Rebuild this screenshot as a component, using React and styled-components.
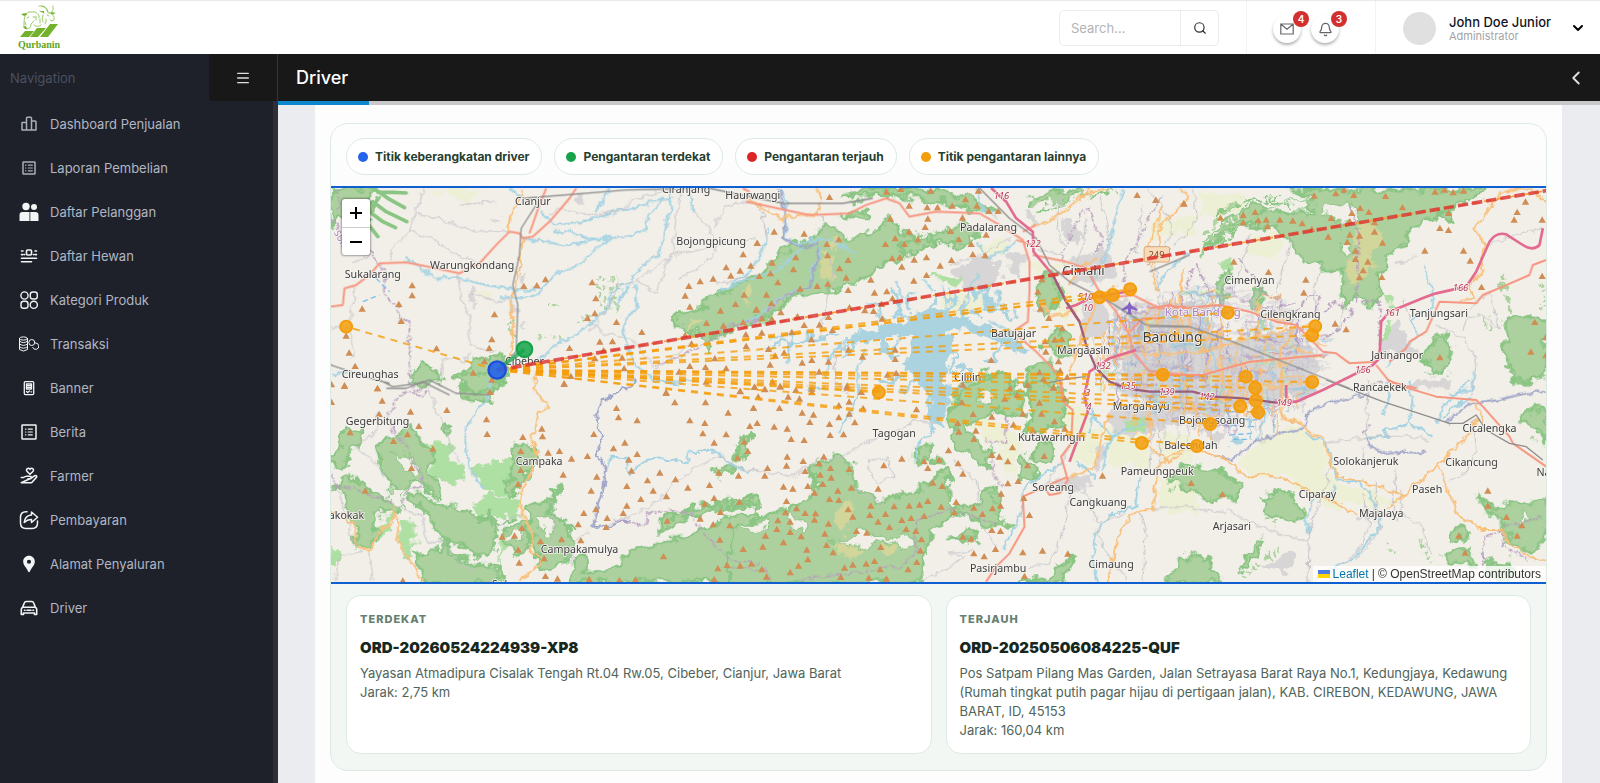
import React from 'react';
import styled, { createGlobalStyle } from 'styled-components';
import { Search, Bell, ChevronDown, ChevronLeft, Menu } from 'lucide-react';
import { MdLocationPin } from 'react-icons/md';

const GlobalStyle = createGlobalStyle`
	* {
		box-sizing: border-box;
	}
	body {
		margin: 0;
		font-family: Inter, 'Open Sans', sans-serif;
		font-size: 13px;
		background: #ebecf0;
	}
	h1, h2, p, ul {
		margin: 0;
		padding: 0;
	}
	button, input {
		font: inherit;
	}
	button {
		cursor: pointer;
		padding: 0;
		border: 0;
		background: none;
	}
`;

const Page = styled.div`
	min-height: 100vh;
	display: flex;
	flex-direction: column;
`;

const TopBar = styled.header`
	height: 54px;
	display: flex;
	align-items: stretch;
	background: #fff;
	border-top: 1px solid #e9e9eb;
`;

const LogoLink = styled.a`
	margin: 3px auto 0 16px;
	width: 46px;
	svg {
		display: block;
	}
`;

const SearchForm = styled.form`
	display: flex;
	align-self: center;
	width: 160px;
	height: 36px;
	margin-right: 27px;
	border: 1px solid #ececee;
	border-radius: 5px;

	input {
		flex: 1;
		min-width: 0;
		border: 0;
		outline: none;
		padding: 0 11px;
		background: transparent;
		color: #333;
		&::placeholder {
			color: #b3b3b5;
		}
	}
	button {
		width: 38px;
		display: flex;
		align-items: center;
		justify-content: center;
		border-left: 1px solid #ececee;
		color: #2c2c30;
	}
`;

const Notices = styled.div`
	display: flex;
	align-items: center;
	gap: 10px;
	width: 130px;
	padding: 3px 0 0 26px;
	border-left: 1px solid #f3f3f5;
	border-right: 1px solid #f3f3f5;
`;

const RoundButton = styled.button`
	position: relative;
	width: 28px;
	height: 28px;
	display: flex;
	align-items: center;
	justify-content: center;
	border-radius: 50%;
	background: #fff;
	color: #66666a;
	box-shadow: 0 2px 3px rgba(0, 0, 0, 0.3);
`;

const Badge = styled.span`
	position: absolute;
	top: -4px;
	right: -8px;
	width: 16px;
	height: 16px;
	border-radius: 50%;
	background: #d32f2f;
	color: #fff;
	font-size: 10px;
	font-weight: 600;
	line-height: 16px;
	text-align: center;
`;

const Profile = styled.button`
	width: 224px;
	display: flex;
	align-items: center;
	gap: 13px;
	padding: 1px 14px 0 27px;
	text-align: left;

	.avatar {
		width: 33px;
		height: 33px;
		border-radius: 50%;
		background: #e0e0e0;
	}
	.name {
		flex: 1;
		color: #14141f;
		font-weight: 500;
		line-height: 15px;
		white-space: nowrap;
	}
	.role {
		display: block;
		color: #a3a3a5;
		font-size: 11px;
		font-weight: 400;
		line-height: 12px;
	}
`;

const Body = styled.div`
	flex: 1;
	display: flex;
`;

const Sidebar = styled.nav`
	flex: 0 0 278px;
	background: #1e2129;
	border-right: 5px solid #302f38;

	ul {
		list-style: none;
		padding-top: 1px;
	}
`;

const SidebarHead = styled.div`
	display: flex;
	justify-content: space-between;
	align-items: center;
	height: 47px;
	padding-left: 10px;
	margin-right: -5px;
	color: #4a5060;

	button {
		width: 69px;
		height: 47px;
		display: flex;
		align-items: center;
		justify-content: center;
		background: #181818;
		color: #ddd;
		border-radius: 0 0 0 4px;
		border-right: 1px solid #34343a;
	}
`;

const NavLink = styled.a`
	height: 44px;
	display: flex;
	align-items: center;
	gap: 11px;
	padding-left: 19px;
	color: #b1b6c4;
	text-decoration: none;

	svg {
		width: 20px;
		height: 20px;
		color: ${(props) => (props.$muted ? '#a9aebb' : '#f3f4f6')};
	}
`;

const Main = styled.main`
	flex: 1;
	min-width: 0;
	display: flex;
	flex-direction: column;
`;

const TitleBar = styled.div`
	height: 47px;
	display: flex;
	align-items: center;
	justify-content: space-between;
	padding: 0 13px 0 18px;
	background: #181818;
	color: #fff;

	h1 {
		font-size: 18px;
		font-weight: 500;
	}
	button {
		display: flex;
		color: #e2e2e2;
	}
`;

const Progress = styled.div`
	height: 4px;
	background: #c8c8c8;
	&::before {
		content: '';
		display: block;
		width: 91px;
		height: 4px;
		background: #0b87d0;
	}
`;

const Content = styled.div`
	flex: 1;
	margin: 0 38px 0 37px;
	padding: 18px 15px 12px;
	background: #fdfdfd;
`;

const Panel = styled.section`
	border: 1px solid #dcebe2;
	border-radius: 18px;
	background: linear-gradient(#fdfdfd, #f2f7f4 70%);
`;

const Legend = styled.ul`
	display: flex;
	flex-wrap: wrap;
	gap: 12px;
	&& {
		padding: 14px 15px 11px;
	}
	list-style: none;
`;

const Chip = styled.li`
	height: 37px;
	display: flex;
	align-items: center;
	gap: 7px;
	padding: 0 12px 0 11px;
	border: 1px solid #dcebe2;
	border-radius: 19px;
	background: #fff;
	color: #26402f;
	font-size: 12px;
	font-weight: 700;
	white-space: nowrap;

	&::before {
		content: '';
		width: 10px;
		height: 10px;
		border-radius: 50%;
		background: ${(props) => props.$color};
	}
`;

const MapBox = styled.div`
	position: relative;
	height: 398px;
	overflow: hidden;
	border-top: 2px solid #0f5fd0;
	border-bottom: 2px solid #0f5fd0;
	background: #f2efe9;

	> svg {
		display: block;
		width: 100%;
		height: 100%;
	}
`;

const ZoomControl = styled.div`
	position: absolute;
	top: 11px;
	left: 11px;
	display: flex;
	flex-direction: column;
	border-radius: 3px;
	background: #fff;
	box-shadow: 0 0 2px 1px rgba(0, 0, 0, 0.35);

	button {
		width: 28px;
		height: 28px;
		display: flex;
		align-items: center;
		justify-content: center;
		color: #000;
	}
	button + button {
		border-top: 1px solid #ccc;
	}
`;

const Attribution = styled.div`
	position: absolute;
	right: 0;
	bottom: 0;
	display: flex;
	align-items: center;
	gap: 3px;
	padding: 0 5px;
	background: rgba(255, 255, 255, 0.8);
	color: #333;
	font: 12px/16px 'Liberation Sans', Arial, sans-serif;

	a {
		display: flex;
		align-items: center;
		gap: 3px;
		color: #0078a8;
		text-decoration: none;
	}
`;

const Cards = styled.div`
	display: grid;
	grid-template-columns: 1fr 1fr;
	gap: 14px;
	padding: 11px 15px 16px;
`;

const Card = styled.article`
	min-height: 159px;
	padding: 14px 13px 11px;
	border: 1px solid #dcebe2;
	border-radius: 15px;
	background: #fff;
	color: #50645a;

	.kind {
		color: #668070;
		font-size: 11px;
		font-weight: 800;
		letter-spacing: 1px;
		line-height: 18px;
	}
	h2 {
		margin: 8px 0 4px;
		color: #16271d;
		font-size: 15px;
		font-weight: 900;
		line-height: 24px;
	}
	p {
		line-height: 19px;
	}
`;

const Logo = () => (
	<svg width='46' height='47' viewBox='0 0 46 47' aria-label='Qurbanin'>
		<g fill='#73b22b'>
			<path d='M4 33 L9 27 H18 L13 33Z M14 33 L21 24 H30 L22 33Z M24 33 L34 20 H42 L32 33Z' />
			<path d='M5 10l5-1 1 2-3 1zM24 7l4 0 0 2zM7 23l3-1 1 3-2 0zM34 8l5 1-3 2z' />
		</g>
		<g fill='none' stroke='#73b22b' strokeWidth='0.7' strokeLinecap='round'>
			<path d='M10 10 Q12 7 15 8 Q19 7 21 9 M9 12 Q8 15 8 19 Q7 24 10 25 Q15 25 15 20 L18 17 M22 10 Q24 12 23 14 M11 14 l2 -1 M17 13 l2 0 M9 18 l1 3 M20 12v4' />
			<path d='M23 2 Q30 1 32 8 M26 2 Q31 3 32 8 M37 2 Q38 6 36 8 M32 9 L39 9 M37 11 Q39 14 38 16 Q36 18 34 16 M28 9 L24 7 M27 11 Q25 14 27 18 M31 11 l2 1 M30 15 Q31 18 29 20' />
			<path d='M18 21 Q22 24 25 21 M24 15 v4' />
		</g>
		<text
			x='23'
			y='44'
			textAnchor='middle'
			fontFamily="'Liberation Serif', serif"
			fontWeight='700'
			fontSize='10'
			fill='#5fa51f'
		>
			Qurbanin
		</text>
	</svg>
);

const Glyph = ({ children, width = 1.5 }) => (
	<svg
		viewBox='0 0 20 20'
		fill='none'
		stroke='currentColor'
		strokeWidth={width}
		strokeLinecap='round'
		strokeLinejoin='round'
		aria-hidden='true'
	>
		{children}
	</svg>
);

const PodiumGlyph = () => (
	<Glyph>
		<path d='M3 8.5h4.500v7.500H3zM7.500 16V4q0-.8.800-.8h3.400q.800 0 .800.800v12zM12.500 7h3.700q.800 0 .800.800V16h-4.500z' />
	</Glyph>
);

const ListGlyph = ({ size = 12 }) => {
	const start = (20 - size) / 2;
	return (
		<Glyph>
			<rect x={start} y={start} width={size} height={size} rx='0.5' />
			<path d='M6.5 7.2h.4M6.5 10h.4M6.5 12.8h.4M9.3 7.2h4M9.3 10h4M9.3 12.8h4' strokeWidth='1.2' />
		</Glyph>
	);
};

const PeopleGlyph = () => (
	<Glyph>
		<g fill='currentColor' stroke='none'>
			<circle cx='7' cy='4.5' r='3.7' />
			<circle cx='15' cy='5' r='3' />
			<path d='M.5 19v-6q0-3 3-3h7v9z M11.3 19V10h5q3.2 0 3.2 3v6z' />
		</g>
	</Glyph>
);

const CattleGlyph = () => (
	<Glyph width={1.6}>
		<rect x='7.5' y='4' width='5' height='5' rx='1' />
		<path d='M2.5 5h1.5M2.5 8.6h1.5M16 5h1.5M16 8.6h1.5M5.5 8.6h.2M14.4 8.6h.2M2.5 12.3h15M2.5 15.8h10' />
	</Glyph>
);

const CategoryGlyph = () => (
	<Glyph width={1.4}>
		<circle cx='5.5' cy='5.5' r='3.6' />
		<rect x='11.3' y='2' width='7' height='7' rx='2.6' />
		<rect x='2' y='11.3' width='7' height='7' rx='2.6' />
		<circle cx='14.8' cy='14.8' r='3.6' />
	</Glyph>
);

const CoinsGlyph = () => (
	<Glyph width={1}>
		<ellipse cx='4.5' cy='4.5' rx='4' ry='1.6' />
		<path d='M.5 4.5v11q4 3 8 0v-11M.5 7.2q4 3 8 0M.5 10q4 3 8 0M.5 12.8q4 3 8 0' />
		<circle cx='12.8' cy='8.5' r='3' />
		<path d='M16.7 9a3.2 3.2 0 1 1-3 4.5' />
	</Glyph>
);

const BannerGlyph = () => (
	<Glyph width={1.3}>
		<rect x='5.3' y='3.6' width='9.4' height='13' rx='1' />
		<path d='M7.5 6h5v5h-5zM7.5 7.7h5M7.5 9.4h5M7.5 13.5l1.2 1 1.8-1.5M12 13.8h.6' />
	</Glyph>
);

const FarmerGlyph = () => (
	<Glyph width={1.6}>
		<path d='M11 8.2 7.900 5.200Q6.900 3.600 8.200 2.600 9.700 1.700 11 3.300q1.300-1.600 2.800-.7 1.300 1 .3 2.600z' />
		<path d='M2.300 11.500h2.200q1.800-1.500 3.700-1.300h2.600q1.600.1 1.600 1.300t-1.500 1.400H9M12.400 12l3.400-2.300q1.200-.6 1.800.3.400.9-.500 1.700L13 16.300q-.700.500-1.500.500H2.300z' />
	</Glyph>
);

const ShareGlyph = () => (
	<Glyph width={1.5}>
		<path d='M8 1.8H7Q1.5 1.8 1.5 7.5v5.5q0 5.5 5.5 5.5h6q5.5 0 5.5-5.5v-2' />
		<path d='M12.5 2v3Q6 5.5 5.2 12.5 8.5 9.2 12.5 9.5v3L18.6 7.2z' />
	</Glyph>
);

const CarGlyph = () => (
	<Glyph width={1.6}>
		<path d='M3.5 9.5 5.3 5q.5-1.5 2-1.5h5.400q1.5 0 2 1.5l1.800 4.5q1.200.5 1.200 2v5h-2.200V15H4.500v1.5H2.300v-5q0-1.500 1.200-2zM4 9.300h12M5.500 12.300h.6M13.900 12.300h.6M8 12.300h4' />
	</Glyph>
);

const MailGlyph = () => (
	<svg width='14' height='14' viewBox='0 0 14 14' fill='none' stroke='currentColor' strokeWidth='1.2'>
		<path d='M.8 2h12.4v10H.8zM1 2.300l6 4.900 6-4.900' />
	</svg>
);

const NAV = [
	{ label: 'Dashboard Penjualan', icon: <PodiumGlyph />, muted: true },
	{ label: 'Laporan Pembelian', icon: <ListGlyph />, muted: true },
	{ label: 'Daftar Pelanggan', icon: <PeopleGlyph /> },
	{ label: 'Daftar Hewan', icon: <CattleGlyph /> },
	{ label: 'Kategori Produk', icon: <CategoryGlyph /> },
	{ label: 'Transaksi', icon: <CoinsGlyph /> },
	{ label: 'Banner', icon: <BannerGlyph /> },
	{ label: 'Berita', icon: <ListGlyph size={14} /> },
	{ label: 'Farmer', icon: <FarmerGlyph /> },
	{ label: 'Pembayaran', icon: <ShareGlyph /> },
	{ label: 'Alamat Penyaluran', icon: <MdLocationPin /> },
	{ label: 'Driver', icon: <CarGlyph /> },
];

const LEGEND = [
	['Titik keberangkatan driver', '#2563eb'],
	['Pengantaran terdekat', '#16a34a'],
	['Pengantaran terjauh', '#dc2626'],
	['Titik pengantaran lainnya', '#f59e0b'],
];

// map tiles: every layer is drawn tile by tile, offsets in map units (3 per px)
const TILES = {
	a: [0, 0],
	b: [1320, 0],
	c: [2520, 0],
	d: [0, 825],
	e: [1320, 825],
	f: [2520, 825],
};

const FOREST = {
	a: 'M63 249H210L180 300 190 330 120 350 90 330 70 360 63 400Z M458 835L470 790 520 755 570 750 600 790 590 830 550 850 540 890 470 880Z M300 830L330 780 390 795 395 830 340 840Z M1090 655L1110 630 1160 610 1240 560 1290 530 1360 500 1400 450 1500 405 1540 365 1580 370 1610 400 1660 390 1700 370 1750 330 1770 380 1830 400 1800 430 1760 470 1700 490 1650 530 1580 555 1520 570 1440 580 1400 620 1330 650 1270 670 1220 700 1190 740 1170 690Z',
	b: 'M280 270L340 252 410 249 580 255 700 290 740 320 660 310 560 290 480 275 420 270Z M520 390L600 370 640 350 680 400 630 420 560 410Z M280 330L330 310 360 330 320 345Z M830 290L900 262 1000 255 960 275 870 292Z M440 425L540 400 560 415 470 445Z M865 540L900 500 930 560 920 600 895 640 870 600Z M880 720L930 660 960 700 950 760 900 740Z M600 870L640 830 700 810 760 800 800 850 850 870Z M840 790L900 770 930 820 880 870 820 860Z',
	c: 'M420 249H1010L980 285 930 300 880 320 830 345 790 375 760 420 720 450 690 510 690 570 660 610 630 580 580 600 565 540 580 505 530 485 480 470 440 455 425 400 380 375 330 360 280 350 180 430 160 440 230 370 270 330 310 300 380 320 480 330 490 300 480 275Z M1060 650L1090 630 1191 640V800L1150 830 1090 835 1080 780 1060 740 1070 700Z M840 740L850 710 880 690 910 720 900 790 860 810 820 770Z M870 320L900 325 915 350 880 345Z M200 570L225 480 245 500 230 560 215 600Z M295 600L310 555 345 550 325 610Z',
	d: 'M100 150L150 155 150 185 120 210 130 230 100 270 63 245 63 225 95 210Z M200 190L300 145 350 190 370 210 355 260 375 300 385 360 345 325 320 300 280 330 240 320 230 280 210 250Z M80 320L115 292 150 305 190 340 260 370 250 400 190 400 205 460 180 500 140 500 140 450 110 390Z M610 205L640 195 680 205 670 260 640 310 600 345 580 330 615 280Z M300 335L340 345 380 375 440 380 500 400 540 430 550 390 560 480 540 520 490 520 450 490 410 490 380 450 360 400 320 380Z M320 520L390 510 410 480 430 530 480 540 560 560 570 610H340L330 560Z M660 370L720 360 730 400 780 440 790 490 770 540 700 570 680 540 660 470Z M580 450L650 430 670 480 630 520 590 490Z M770 610L790 540 830 530 830 580 900 570 940 540 970 510 1020 500 1070 480 1130 470 1190 450 1250 410 1350 400V610Z M1050 450L1060 410 1140 400 1150 380 1290 360 1350 345 1350 370 1190 395 1090 430Z M1275 240L1285 190 1320 160 1310 240Z M1215 270L1270 262 1260 282 1215 285Z M430 -5L500 -20 580 0 560 20 500 40Z M395 125L425 130 420 160Z M725 330L765 328 740 345 730 365Z',
	e: 'M-60 610V440L0 430 60 400 120 390 130 370 190 350 200 240 270 235 310 250 310 320 390 365 460 345 510 345 520 310 570 290 595 265 600 370 620 390 650 370 700 370 710 330 745 330 740 410 780 435 730 440 680 420 620 400 540 450 520 530 520 610Z M595 140L600 80 640 30 700 0 760 -20 800 20 810 70 830 100 780 105 740 90 700 120 650 120 650 150 700 200 735 220 720 255 680 240 615 200 615 150Z M840 230L870 190 910 200 905 240 860 240Z M805 290L825 240 870 270 840 310Z M500 200L540 195 545 250 500 245Z M558 230h22v20h-22z M610 470L680 450 690 480 650 490Z M800 610L900 590 940 540 970 535 950 580 930 610Z M830 20L880 0 950 50 940 130 880 160 830 150 850 90Z M0 360L20 342 30 365 15 390Z',
	f: 'M60 300L100 250 200 270 270 310 260 350 200 360 130 340Z M340 350L400 330 470 400 440 425 350 400Z M50 610L90 540 170 530 190 570 220 610Z M1115 110L1190 75V185L1150 160Z M985 340L1040 390 1100 365 1190 365V480L1140 520 1080 490 1065 420 1010 390Z M905 460L930 430 955 460 930 490Z M880 520L960 510 975 560 940 540 900 550Z M1010 550L1080 545 1090 590 1060 610Z M1085 0H1150L1120 15Z M320 480L345 478 325 520 280 570 262 575 300 520Z',
};

const LIGHT_GREEN = {
	d: 'M360 200L410 180 440 240 470 270 440 310 400 310 370 290Z M500 260L560 240 620 240 630 300 600 350 540 340 500 300Z M480 390L530 345 620 350 630 420 560 410 500 420Z M190 450L250 400 250 440 200 490Z M270 430L310 420 320 490 300 540 280 540Z M63 505L100 540 63 565Z M580 440L560 560 590 500Z',
	c: 'M205 470L245 455 255 480 230 490Z M690 575L735 580 730 600 700 595Z M700 650L725 660 725 700 700 705Z M320 650L355 640 350 675 325 670Z',
	b: 'M540 500L620 520 650 510 600 550Z M20 640L60 620 40 660Z',
	e: 'M1130 120L1190 110 1180 150 1140 150Z',
};

const FARM = {
	a: 'M330 250L450 252 520 265 480 290 400 260Z M490 560L560 555 540 590Z',
	b: 'M700 420L790 390 760 450 700 450Z M590 560L700 570 720 600 650 640 580 600Z M830 470L960 480 940 500 850 510Z M860 560L960 560 1000 620 940 640Z',
	c: 'M150 250L290 270 270 320 150 340Z M310 390L400 380 380 460 300 450Z M20 340L150 330 120 380 0 400Z',
	e: 'M650 120L760 130 830 190 780 300 740 200Z M880 60L980 60 1020 120 1000 220 970 240 950 150 900 110Z M1060 150L1130 110 1190 130 1200 260 1080 260Z M1220 290H1340V390H1230Z M980 160L1060 150 1040 250 980 240Z',
	f: 'M255 250L380 150 460 145 530 200 540 270 570 320 560 400 460 330 400 290 300 290Z M560 310L680 330 770 370 680 380 580 360Z M30 150L130 170 130 240 40 250Z',
};

const URBAN = {
	a: 'M790 250L820 255 825 300 800 295Z M550 330L575 340 570 350Z M480 550L510 560 500 595 480 590Z M620 512L650 518 640 530Z M640 660L660 665 645 680Z M600 590L620 600 605 620Z',
	b: 'M615 490L680 460 750 470 760 520 700 560 640 540Z M770 450L830 440 820 510 780 500Z M940 340L990 380 980 420 950 400Z M1000 590L1060 580 1080 640 1030 720 1000 700Z M1080 580L1160 590 1170 640 1100 630Z M960 470L1060 430 1100 500 1060 540 980 530Z M830 300L880 350 860 360 820 320Z',
	c: 'M-60 640L60 620 240 700 400 680 480 720 500 800 430 870H-80Z M700 690L740 640 800 740 700 750Z M780 830L880 820 890 850 790 850Z M-10 600L160 590 200 640 0 650Z M575 430L600 445 580 450Z',
	e: 'M1040 210L1070 190 1060 270 1040 270Z M1080 90L1200 80 1320 100 1300 130 1150 170 1090 160Z M890 310L960 290 1030 280 1010 330 930 340Z M1180 0H1340V110L1200 80Z M840 90L880 70 870 110Z',
	f: 'M-20 0H430L400 60 260 80 200 110 60 90Z M340 560L430 510 440 530 400 580Z M410 10L500 0 490 40 430 60Z M150 150L230 160 190 210Z M630 395L680 390 680 430 640 420Z M780 0H890V10L790 20Z',
};

const LAKE = {
	b: 'M265 730L330 685 400 668 470 640 520 620 570 615 640 640 690 655 740 672 800 690 850 735 830 742 770 722 700 700 640 672 580 680 600 690 620 740 590 760 600 870 580 960 540 945 540 870 500 835 470 780 480 740 500 700 440 692 380 705 330 715Z M690 560L740 600 730 610 690 590Z M690 312L705 310 710 325 692 325Z',
	f: 'M235 185L260 170 280 190 265 205 240 200Z M0 40L20 30 30 55Z',
};

// narrow arms of the reservoir
const INLETS =
	'M1590 690L1530 700 1500 690 1440 720 1400 715 1380 740M1660 670L1640 690 1620 740 1600 760M1700 660L1720 720 1740 760 1770 740M1720 650L1700 600 1680 590M1760 640L1770 590 1750 560M1800 630L1790 590 1810 560M1850 620L1880 590 1870 560M1900 640L1930 600 1920 560M1940 650L1980 620 2010 630M2000 660L2040 680M1820 700L1860 740 1850 780 1790 770M1900 700L1940 760 1920 800M1920 800L1980 790M1920 850L1970 840M1820 830L1770 860M1990 590L2010 540 2040 560M2020 600L2080 620 2120 640M2060 590L2070 550M1960 590L1970 620M2080 720L2060 760 2020 780M1780 800L1750 830 1700 820M1500 860L1540 850';

const YELLOW = {
	a: 'M1130 660L1170 640 1180 650 1140 670Z M1290 560L1330 540 1320 600Z',
	b: 'M210 450L250 440 260 500 220 540Z M230 405L270 400 250 430Z',
	c: 'M620 350L670 345 690 400 660 450 680 480 640 520 600 540 590 480 620 430Z',
	e: 'M275 380L300 360 320 390 270 460 260 420Z M250 490L300 485 340 520 290 540Z M390 495L430 480 450 510 420 520Z',
};

const CLEARING = {
	c: 'M520 305L560 298 620 300 615 340 570 365 555 340 520 325Z M325 315L480 275 490 300 470 320Z M580 425L605 430 600 445 575 445Z',
	d: 'M245 215L300 225 330 270 310 290 270 250Z M240 330L290 320 280 380 245 370Z M680 405L715 400 740 450 700 470Z M590 460L640 450 640 480 600 480Z',
	e: 'M220 480L300 475 330 450 400 470 470 460 500 490 470 520 430 480 380 490 340 520 310 490Z M120 390L180 440 170 460 110 410Z M-40 440L60 420 60 450 10 450Z M690 30L740 40 720 70 680 60Z',
	f: 'M1130 400L1160 420 1110 430Z',
};

const RIVERS = {
	a: 'M285 458L340 495 380 520 440 515 500 535 560 545 640 555 700 548 750 500 810 480 850 440 900 400 960 390 1000 380 1020 330 1060 285 1090 275 M690 320L740 360 800 355 850 340 920 320 1000 300 1060 280 M640 400L700 410 760 420 830 410 890 400 M730 378L780 380 830 400 900 402 M1085 250L1080 320 1060 400 1050 450 1000 480 960 530 900 560 900 600 840 660 780 700 740 720 690 760 M975 540L985 600 940 660 950 720 980 780 1040 830 1150 830 M570 575L640 580 680 570 700 550 M600 250L640 280 M860 320L900 250 M920 600L960 540 M63 808L110 800 M1230 560L1320 520 1400 500 1480 430 M1140 260L1150 320',
	b: 'M90 255L110 290 110 370 100 400 150 415 200 410 215 440 190 490 180 550 120 560 20 640 -40 660 M60 370L40 440 0 500 -60 540 M180 400L250 410 320 445 M680 250L700 310 730 320 M1120 250L1100 330 1080 400 1070 460 1020 540 M440 530L460 580 440 620 470 640 M520 520L550 560 M600 600L580 540 M640 640L660 560 690 500 M700 600L720 540 M780 620L740 590 M60 700L130 690 110 780 M280 710L240 760 230 820 M330 870L320 800 350 740 M680 410L710 460 760 440 800 410 M720 650L790 680 M420 750L450 700',
	c: 'M825 490L850 550 850 600 790 640 800 700 750 740 710 780 M970 800L970 850 900 870 M180 560L160 620 180 700 200 790 M60 700L100 760 120 870 M20 560L50 500 120 440 M620 250L640 200',
	d: 'M545 0L540 40 500 100 465 150 470 220 490 280 520 325 M890 270L905 230 950 235 960 280 1010 240 1060 235 1130 250 1140 215 1220 215 1260 250 1320 280 M1050 5L1110 15 M980 0L960 10',
	e: 'M330 20L310 90 265 160 M530 0L540 100 550 150 505 190 500 240 M1000 60L1030 90 1020 160 M940 250L870 290 820 330 810 410 780 470 760 510 M980 240L1040 300 M1020 100L1090 170 1120 150 1200 130 M1170 290L1160 380 1080 405 1040 460 1030 540 1045 605 M1060 270L1080 180 1100 150',
	f: 'M470 160L530 190 550 260 570 300 630 310 660 340 690 400 695 440 640 500 620 530 560 560 490 605 M490 360L470 420 480 460 M710 0L720 60 700 110 M780 0L790 80 770 140 700 150 720 170 650 175 M780 130L850 170 M960 0L880 80 860 130 M970 50L900 90 880 120 M320 190L350 100 M530 350L560 320',
};

const DARK_RIVERS = {
	b: 'M85 250L110 330 100 400 170 430 210 410 200 480 180 550 120 570',
	d: 'M980 0L940 30 880 60 860 100 865 150 880 170 860 220 890 270 880 330 860 390 850 440 900 440 960 420',
	f: 'M200 230L250 240 280 210 330 180 400 160 460 145 480 90 530 70 590 60 650 40 M890 130L960 70 1060 55 1130 40 1190 35 M650 170L660 200 710 220 830 215 M150 120L190 140',
};

const MINOR = {
	a: 'M340 250L320 320 300 380 250 430 240 470 M320 325L400 345 500 380 600 380 M300 380L360 395 420 440 500 470 M135 545L130 600 120 640 130 700 130 760 M63 670L120 672 M130 470L180 450 M445 510L455 580 480 640 480 720 560 740 M480 740L470 770 400 760 395 820 M720 330L760 310 840 330 930 320 980 280 1060 260 M1120 255L1100 330 1090 450 980 530 920 540 900 600 840 680 M1150 320L1200 370 1220 440 1180 480 1110 520 M1210 370L1250 300 1320 290 M1340 400L1260 410 1200 430 1080 450 M1220 540L1320 510 M480 560L560 590 600 580 M820 640L880 680 960 700 1040 790 1150 710 M450 300L560 290 M1080 450L1040 560 980 530',
	b: 'M0 280L40 320 50 400 M220 330L230 420 250 500 240 560 210 700 M600 480L680 460 780 400 M660 560L600 650 M250 730L260 830 300 870 M940 250L920 360 940 420 M1010 340L1000 420 980 470 M850 610L890 630 M860 430L940 450 M1050 260L1080 400 1040 520 M1180 300L1160 440 M1190 250L1240 300 1270 380 1220 470 1230 600 M700 300L750 350',
	c: 'M130 250L140 340 100 400 70 420 M300 390L270 500 250 580 M430 400L400 490 380 560 M520 480L490 560 500 600 M800 450L740 480 M860 660L940 700 980 760 970 870 M940 680L950 640 1000 630 1050 670 1020 560 960 610 M760 580L780 640 M1020 420L1100 390 1180 370 M820 340L800 350 M590 600L560 680',
	d: 'M360 20L380 100 410 140 420 200 450 250 M63 320L90 340 110 400 130 500 M130 195L190 240 230 290 M205 90L200 160 130 195 M260 380L340 410 350 480 400 490 M400 490L460 560 500 580 M180 510L190 600 M160 510L90 530 75 600 M790 495L840 450 M890 440L960 410 1040 370 1100 300 1200 240 1240 230 1300 270 1350 270 M730 360L740 470 700 540 M790 500L790 560 M560 440L640 400',
	e: 'M0 270L130 290 200 240 280 230 360 180 420 160 500 120 560 130 M360 240L420 235 430 290 380 310 360 270Z M310 320L390 370 400 350 M520 600L600 560 640 530 600 520 670 510 M960 340L940 460 900 550 840 560 M1040 440L1060 500 1130 600 M960 200L900 300 860 330 M1170 390L1190 460 1180 600 M740 500L700 440 680 300 610 240 M950 300L1020 350 1040 430 1130 400 M1200 270L1210 140',
	f: 'M230 390L290 420 360 450 450 480 480 480 M540 260L530 320 480 440 475 605 M640 200L650 260 M655 0L650 180 M680 300L680 400 700 440 620 540 M750 330L760 400 820 440 840 520 M640 340L660 440 620 520 540 580 M530 190L620 175 760 165 840 180 M0 180L30 150 30 260 M330 80L340 190 M740 260L730 380 740 430 M60 80L80 130 M900 300L950 280 980 200 970 120 1000 110 M0 390L100 380 230 400',
};

const BORDERS = {
	a: 'M63 330L85 370 100 420 180 440 230 500 220 540 240 590 270 605 265 640 300 650 300 830 320 860 360 830 M85 250V320 M1350 645L1260 660 1200 710 1100 760 1040 780',
	b: 'M950 500L940 440 990 330 1020 305 1040 370 1060 400 1040 440 M1130 470L1160 420 1200 330 1240 270 M30 640L120 560 180 555 M1120 480L1130 560 M1160 600L1150 700',
	c: 'M130 490L110 560 130 580 M340 565L390 580 400 630 440 620 480 570 510 570 500 620 M520 620L560 590 610 620 560 680 520 700 M640 590H690L690 720 M620 590L630 400 600 300 M-10 480L60 430 M270 460L310 520 340 560 M140 480L190 580',
	d: 'M360 38L330 45 290 35 260 55 235 110 250 150 290 200 320 260 340 290 330 320 290 330 280 370 M63 280L80 320 130 325 190 350 250 365 M910 420L1010 435 1010 400 1080 390 1150 400 1160 430 1200 480 1260 540 1350 550',
	e: 'M775 110L770 190 710 180 M730 220V280L760 320 M-60 560L50 570 60 605 M500 420L500 520 450 560 300 580 150 600 M500 420L600 390 740 430',
	f: 'M1060 450L1000 480 1000 560 M1060 440L1110 430 1180 410 M640 160L660 140 M1060 450V500L1140 540 M700 10L640 20',
};

const SECONDARY = {
	a: 'M640 250L620 300 600 340 595 380 M640 395L630 480 610 580 600 620 615 660 600 760 M680 800L670 850 720 910 690 920 680 980 660 990 680 1040 670 1100',
	b: 'M200 250L215 270 205 325 100 335 100 350 M-10 280L60 320 100 340 M850 360L900 350 1000 270 1080 250 M1020 250L990 290 M960 540L1000 480 1050 460 M870 590L900 630 980 620 M1240 300L1220 360 1200 420 1200 480 M960 800L1000 690 1040 600 1100 540',
	c: 'M90 250L120 270 80 320 30 360 30 430 10 480 20 560 M1190 295L1160 260 1100 250 1050 265 1000 340 970 370 1010 420 990 460 1000 500 960 540 970 580 930 590 M100 490L90 600 80 700 M0 750L150 740 300 700 480 660 M210 640L220 870 M400 870L390 740 430 680',
	d: 'M670 270L640 320 630 370 650 420 670 460 665 510 695 545 630 605 M63 395L100 400 140 450 140 500 180 510 210 460 250 420 258 385 265 480 300 540 340 605',
	e: 'M1080 100L1060 160 1040 240 1030 265 950 295 M1075 605L1100 500 1110 450 1165 390 1210 392 1220 270 1260 230 1320 200',
	f: 'M0 200L60 250 100 220 M150 210L230 240 290 290 340 285 390 290 430 310 520 350 620 400 M395 0L395 100 410 125 450 125 475 155 520 175 540 240 570 290 630 305 700 320 720 340 770 345 M715 385L820 300 880 240 960 160 985 110 M870 260L900 340 920 400 1000 450 1060 450 1070 480 1140 530 1190 545 M150 170L140 100 110 40 100 0 M970 60L1000 110 1000 125',
};

const TRUNK = {
	a: 'M63 605L100 600 105 550 140 540 180 510 210 475 290 472 370 488 450 505 510 475 560 420 600 380 630 385 640 400 670 395 720 350 780 280 800 250 M710 250L690 300 660 385',
	b: 'M0 260L-20 250 M-10 290L60 305 180 330 300 325 350 300 410 280 450 295 480 335 560 320 690 325 750 360 820 405 840 470 840 560 835 650 790 680 860 740 910 790 935 830 940 890 M820 380L860 360 M850 450L950 470 1010 490 1050 560 1100 620 1140 690 1150 740 1200 800 1320 810 M1060 580L1150 570 1230 610 1310 605 M1140 680L1180 640 1230 640 M800 405L850 420',
	c: 'M0 610L60 600 100 610 210 600 300 620 380 650 440 660 M440 660L520 740 560 745 600 775 680 770 M680 780L720 830 800 850 M1190 465L1150 480 1140 510 1060 545 1000 570 980 595 870 590 830 680 780 710 770 730 720 770 M0 810L160 810 300 770 520 750',
	e: 'M930 0L945 70 970 90 965 190 935 230 955 300 930 340 900 345 890 330 M955 290L820 350 825 440 780 520 740 560 710 605',
	f: 'M715 0L760 20 860 50 980 60 1000 80 1080 170 1090 190 1190 260',
};

const RAIL = {
	a: 'M680 300L635 370 630 450 610 540 625 600 620 740 570 790 M640 280L950 255 1200 250 1420 295 1600 295 1690 280 M230 850L290 850 340 830 400 860 420 870',
	b: 'M690 249L780 340 860 400 900 480 960 530 1080 590 1190 660 1320 665',
	c: 'M0 665L120 665 250 710 600 850 M0 500L120 450',
	d: 'M210 0L250 20 330 10 360 0 390 15 440 40 540 45 M63 -45L200 0 240 10',
	e: 'M890 10L960 -5 1010 -10',
	f: 'M530 0L700 65 900 130 940 130 980 105 1010 150 1080 190 1130 200 1180 240',
};

const MOTORWAY =
	'M2045 249L2090 290 2120 340 2170 380 2172 440 2230 510 2270 590 2310 650 M2900 893L2960 890 3040 855 3190 780 3210 760 3215 650 3240 620 3350 575 3380 565 3470 545 3500 500 3540 410Q3560 380 3590 388L3640 420Q3670 440 3690 420L3700 370 M2480 735L2400 760 2340 800 2325 870 2335 920 2280 1070 M2270 610L2300 600 2340 580 2480 555 M2930 890L2930 840';
const TOLL_DARK = 'M2230 510L2270 590 2310 650 2330 720 2360 790 2400 830 2450 850 2520 860 2650 860 2700 874 2800 880 2900 893';

const PEAKS = {
	a: '308 541 308 571 268 597 275 648 158 611 110 692 119 743 137 783 105 842 66 838 204 850 381 730 555 628 547 703 539 729 525 769 491 803 547 824 643 543 682 541 708 523 848 532 859 580 856 625 834 639 921 651 997 681 780 729 871 710 909 709 882 736 856 760 938 758 944 790 784 813 764 836 542 861 1127 572 1138 543 1141 605 1172 529 1211 521 1250 487 1264 512 1292 497 1324 482 1301 448 1343 414 1304 569 1278 597 1233 617 1191 654 1242 662 1301 652 1309 688 1341 613 1127 690 1146 716 1310 723 1216 760 1141 783 1109 800 1188 786 1250 790 1190 830 1292 858 1070 862',
	b: '240 276 23 414 74 380 164 386 232 417 268 403 234 451 139 457 132 493 68 473 63 505 29 513 85 532 152 551 51 569 66 595 203 543 235 536 270 490 296 465 290 518 296 555 364 524 408 417 437 400 465 417 505 403 479 380 423 341 428 460 451 457 457 485 494 464 531 457 531 510 493 527 572 482 606 465 412 559 375 563 429 580 396 597 372 618 346 616 300 607 398 641 237 636 210 659 249 675 164 660 144 634 94 622 20 614 37 640 68 643 37 683 127 681 186 703 57 732 77 752 104 743 62 779 158 773 187 765 237 770 297 734 339 755 437 734 437 762 440 804 414 809 209 800 69 830 15 846 46 852 92 845 139 855 187 851 293 848 335 861 411 260 454 252 544 257 479 302 533 307 564 307 608 302 648 283 687 257 682 302 718 318 746 318 535 341 527 366 603 378 639 338 628 403 665 417 710 389 670 448 707 451 877 523 865 560 873 611 898 639 938 669 887 709 916 704 937 703 889 740 927 769 953 816 882 822 870 802 932 797 725 765 640 839 781 850 834 839 912 848 1163 270 1219 285 1303 295',
	c: '19 285 103 296 213 338 281 330 317 321 281 352 326 346 350 344 354 364 391 344 430 347 458 355 494 272 559 265 584 254 613 270 708 273 759 307 632 309 607 324 658 321 545 339 601 349 675 352 487 372 536 395 601 389 630 392 675 380 593 411 699 413 618 437 618 462 655 470 641 496 630 517 697 516 857 260 885 254 911 262 942 257 1128 290 1103 321 1094 344 1178 344 897 324 871 369 897 375 826 437 942 437 962 467 1178 513 996 546 253 470 357 501 469 524 463 563 557 656 590 673 871 757 1144 740 1156 651 1189 697 1189 751',
	d: '105 17 204 25 218 62 209 102 303 95 412 90 328 138 294 163 252 183 122 157 370 206 306 264 167 332 66 66 541 36 531 118 533 162 640 171 697 146 699 169 634 213 716 218 750 213 634 270 786 236 834 228 761 284 626 312 862 290 845 332 823 399 806 433 859 388 893 414 890 441 941 399 952 377 994 357 814 481 637 444 615 467 578 470 626 509 629 548 693 484 756 478 704 535 708 588 744 596 839 597 930 600 978 598 1062 529 764 11 921 84 927 112 983 121 853 162 946 188 983 222 958 239 912 205 966 272 952 318 1014 301 1051 278 1031 332 1098 298 1135 323 1071 349 1070 39 1096 67 1188 67 1292 34 1332 84 1256 98 1141 121 1186 129 1321 138 1180 160 1250 163 1214 188 1304 185 1315 213 1284 233 1228 278 1287 287 1200 315 1214 354 1290 365 1186 371 1233 396 1172 416 1211 433 1261 436 1231 479 1301 507 1073 422 1225 565 1253 555 1292 557 1326 551 1214 598 280 602',
	e: '26 50 15 20 46 28 92 18 116 50 150 56 187 37 293 17 335 36 268 76 299 65 341 85 501 88 12 84 90 84 158 98 192 104 23 129 74 140 113 146 181 126 240 132 268 112 299 101 316 127 242 165 282 163 125 177 164 180 113 230 161 243 223 230 209 250 111 257 54 264 46 287 167 273 243 264 299 267 212 284 245 293 220 312 102 320 130 326 175 318 265 332 195 338 305 323 111 363 240 357 268 360 141 385 296 388 167 399 198 400 310 410 108 397 85 421 122 425 195 419 237 431 82 447 122 456 48 467 155 469 226 461 40 500 102 487 231 495 172 509 251 517 175 538 147 557 285 563 310 554 350 551 375 543 122 577 37 568 51 590 274 591 358 593 411 596 392 568 476 568 502 546 513 512 516 478 394 501 352 458 321 453 420 441 470 447 499 453 386 425 361 405 408 402 457 420 485 414 524 408 434 379 479 377 510 374 364 377 535 363 575 380 386 326 403 256 457 236 524 244 569 239 597 211 535 264 626 250 640 281 550 308 578 318 620 366 614 397 673 383 699 402 729 385 753 377 755 341 806 303 775 310 834 256 775 244 749 230 727 225 789 202 884 228 679 152 628 155 673 177 625 129 671 102 637 67 727 110 792 134 820 101 876 101 851 152 915 124 946 146 946 56 870 68 803 45 766 56 912 22 823 354 840 405 1059 287 727 450 753 453 640 470 665 476 673 520 704 529 738 507 820 517 879 512 955 521 825 588',
	f: '125 309 219 343 1015 332 1015 377 1071 411 1117 436 1103 467 928 467 947 518',
};

const PLACES = [
	['Cianjur', 670, 301],
	['Ciranjang', 1130, 264],
	['Haurwangi', 1330, 283],
	['Bojongpicung', 1205, 419],
	['Warungkondang', 488, 493],
	['Sukalarang', 190, 518],
	['Cireunghas', 182, 818],
	['Cibeber', 645, 781],
	['Padalarang', 2037, 378],
	['Batujajar', 2112, 697],
	['Margaasih', 2322, 747],
	['Cililin', 1975, 828],
	['Cimenyan', 2820, 536],
	['Cilengkrang', 2943, 638],
	['Tanjungsari', 3388, 637],
	['Jatinangor', 3263, 761],
	['Rancaekek', 3211, 859],
	['Gegerbitung', 204, 961],
	['akokak', 111, 1243],
	['Campaka', 689, 1080],
	['Campakamulya', 810, 1344],
	['Tagogan', 1754, 995],
	['Kutawaringin', 2226, 1008],
	['Soreang', 2231, 1157],
	['Cangkuang', 2366, 1203],
	['Pameungpeuk', 2543, 1111],
	['Margahayu', 2495, 914],
	['Pasirjambu', 2066, 1401],
	['Cimaung', 2405, 1390],
	['Bojongsoang', 2708, 958],
	['Baleendah', 2644, 1031],
	['Solokanjeruk', 3169, 1079],
	['Cikancung', 3486, 1083],
	['Ciparay', 3024, 1179],
	['Paseh', 3353, 1164],
	['Majalaya', 3215, 1236],
	['Arjasari', 2767, 1274],
	['Cicalengka', 3540, 980],
	['Na', 3702, 1114],
	['Suk', 575, 1450],
];

const EXITS = [
	['116', 2076, 281],
	['122', 2170, 427],
	['510', 2328, 585],
	['10', 2335, 619],
	['132', 2380, 793],
	['135', 2455, 853],
	['139', 2572, 869],
	['142', 2692, 884],
	['149', 2924, 903],
	['156', 3160, 805],
	['161', 3248, 633],
	['166', 3453, 557],
	['3', 2334, 872],
	['4', 2338, 915],
];

const START = [563, 795];
const NEAREST = [645, 733];
const STOPS = [
	[110, 665],
	[2370, 577],
	[2410, 570],
	[2462, 553],
	[2755, 623],
	[3017, 664],
	[3008, 691],
	[2560, 809],
	[1708, 862],
	[2809, 815],
	[3008, 831],
	[2837, 849],
	[2839, 887],
	[2792, 904],
	[2846, 922],
	[2702, 957],
	[2662, 1023],
	[2497, 1014],
];

const Layer = ({ data, ...props }) => (
	<g {...props}>
		{Object.keys(data).map((key) => (
			<path key={key} d={data[key]} transform={`translate(${TILES[key].join(' ')})`} />
		))}
	</g>
);

const pairs = (text) => {
	const nums = text.split(' ').map(Number);
	return nums.filter((n, i) => i % 2 === 0).map((x, i) => [x, nums[i * 2 + 1]]);
};

// city streets around Bandung, spread over an ellipse with a fixed seed
const buildStreets = (count, seed) => {
	let state = seed;
	const rand = () => {
		state = (state * 16807) % 2147483647;
		return state / 2147483647;
	};
	let d = '';
	for (let i = 0; i < count; i++) {
		const angle = rand() * Math.PI * 2;
		const far = Math.sqrt(rand());
		const x = Math.round(2690 + Math.cos(angle) * far * 340);
		const y = Math.round(750 + Math.sin(angle) * far * 210);
		const len = Math.round(20 + rand() * 60);
		const skew = Math.round(rand() * 16 - 8);
		d += rand() > 0.5 ? `M${x} ${y}l${len} ${skew}` : `M${x} ${y}l${skew} ${len}`;
	}
	return d;
};

const STREETS = [
	['#c6e6b4', 5, buildStreets(40, 5333)],
	['#c3bfce', 2, buildStreets(560, 70001)],
	['#ad93c0', 3, buildStreets(130, 31013)],
	['#f9bf78', 4, buildStreets(130, 10177)],
	['#9ccbdd', 4, buildStreets(60, 97711)],
];

const RouteMap = () => (
	<svg viewBox='63 249 3648 1182' preserveAspectRatio='xMidYMid slice' role='img' aria-label='Peta rute pengantaran'>
		<defs>
			<filter id='rough' filterUnits='userSpaceOnUse' x='0' y='200' width='3760' height='1280'>
				<feTurbulence type='fractalNoise' baseFrequency='0.025' numOctaves='4' seed='4' result='noise' />
				<feDisplacementMap
					in='SourceGraphic'
					in2='noise'
					scale='58'
					xChannelSelector='R'
					yChannelSelector='G'
				/>
			</filter>
			<filter id='wavy' filterUnits='userSpaceOnUse' x='0' y='200' width='3760' height='1280'>
				<feTurbulence type='fractalNoise' baseFrequency='0.04' numOctaves='3' seed='9' result='noise' />
				<feDisplacementMap
					in='SourceGraphic'
					in2='noise'
					scale='24'
					xChannelSelector='R'
					yChannelSelector='G'
				/>
			</filter>
		</defs>

		<g filter='url(#rough)'>
			<Layer data={FARM} fill='#eef0d5' />
			<Layer data={URBAN} fill='#d7d5d5' />
			<Layer data={LIGHT_GREEN} fill='#aedfa3' />
			<Layer data={FOREST} fill='#add19e' stroke='#8ac584' strokeWidth='9' strokeLinejoin='round' />
			<Layer data={YELLOW} fill='#d3d69a' />
			<Layer data={CLEARING} fill='#f2efe9' stroke='#8ac584' strokeWidth='4' />
			<Layer data={LAKE} fill='#aad3df' />
			<path d={INLETS} fill='none' stroke='#aad3df' strokeWidth='11' />
			<g stroke='#add19e' strokeWidth='14' strokeDasharray='9 14' fill='none'>
				<path d='M860 520L930 520M855 550L935 545M865 575L925 580M870 605L930 600M700 690L760 695M800 660L850 625M600 650L610 690M710 600L740 590' />
				<path d='M2690 380L2780 290M2710 400L2800 310M2230 280L2340 262M2160 290L2200 285M3580 500L3600 620' strokeDasharray='25 9' />
				<path d='M3700 530L3710 640M3520 650L3560 660M2920 1330L2790 1420M3230 1330L3260 1350M3340 1310L3360 1380' />
				<path d='M2600 1120L2660 1090M2580 1150L2640 1130M2880 1190L2960 1160M2870 1240L2900 1260M2200 860L2260 840' />
			</g>
			<g stroke='#8ac584' strokeWidth='6' strokeDasharray='50 8 20 6' fill='none'>
				<path d='M2680 420L2760 340 2830 280 2960 300M2700 440L2790 370 2860 320M2720 330L2800 290 2900 275M2190 320L2290 275 2420 262M1620 290L1700 275 1800 262' />
				<path d='M500 1240L560 1260 640 1240M720 1190L740 1240 800 1270M1190 1205L1280 1200 1350 1170' strokeWidth='9' />
			</g>
		</g>
		<g stroke='#8ac584' strokeWidth='11' fill='none' strokeLinecap='round' strokeLinejoin='round'>
			<path d='M200 255L235 280 285 308M190 290L230 320 292 350M180 320L220 350 258 368M170 350L205 395M205 262L250 262 290 264' />
		</g>
		<path
			d='M200 520L240 560M160 590L210 570M2760 920L2840 920M2740 960L2840 965M2760 990L2830 985M2750 940L2850 945M2770 1003L2820 1003'
			stroke='#74bdec'
			strokeWidth='4'
			strokeDasharray='16 10'
		/>

		<g fill='none' strokeLinejoin='round' filter='url(#wavy)'>
			<Layer data={RIVERS} stroke='#a3d2e2' strokeWidth='6' />
			<Layer data={DARK_RIVERS} stroke='#9fa5c8' strokeWidth='6' />
			<Layer data={MINOR} stroke='#c2c1c6' strokeWidth='3' />
			<Layer data={BORDERS} stroke='#b79ebd' strokeWidth='5' strokeDasharray='18 5 6 5' />
			{STREETS.map(([color, width, d]) => (
				<path key={color} d={d} stroke={color} strokeWidth={width} />
			))}
			<Layer data={SECONDARY} stroke='#f9bf78' strokeWidth='6' />
		</g>
		<g fill='none' strokeLinejoin='round'>
			<Layer data={TRUNK} stroke='#f79680' strokeWidth='6' />
			<Layer data={RAIL} stroke='#8e8e8e' strokeWidth='4' />
			<path d={MOTORWAY} stroke='#e36a90' strokeWidth='8' />
			<path d={TOLL_DARK} stroke='#9b5f7b' strokeWidth='7' />
		</g>

		<g fill='#d08d54'>
			{Object.keys(PEAKS).map((key) =>
				pairs(PEAKS[key]).map(([x, y]) => (
					<path key={`${key}${x}-${y}`} d={`M${x + TILES[key][0]} ${y + TILES[key][1] - 10}l11 19h-22z`} />
				))
			)}
		</g>

		<path d='M2460 588l5 12 18 12v5l-18-5-1 10 6 6h-20l6-6-1-10-18 5v-5l18-12z' fill='#8461c4' />
		<rect x='2504' y='425' width='76' height='46' rx='6' fill='#f8dcb9' stroke='#d9a877' strokeWidth='3' />

		<g
			fontFamily="'Noto Sans', sans-serif"
			textAnchor='middle'
			fill='#3c3c3c'
			stroke='#f6f4f0'
			strokeWidth='5'
			strokeLinejoin='round'
			paintOrder='stroke'
		>
			{PLACES.map(([name, x, y]) => (
				<text key={name} x={x} y={y} fontSize='32'>
					{name}
				</text>
			))}
			<text x='2322' y='510' fontSize='39'>
				Cimahi
			</text>
			<text x='2589' y='712' fontSize='42'>
				Bandung
			</text>
			<text x='2680' y='633' fontSize='34' fill='#a77fc0'>
				Kota Bandung
			</text>
			<text x='2541' y='459' fontSize='28' fill='#7a4a32' stroke='none'>
				249
			</text>
			<g fontSize='28' fontStyle='italic' fill='#b8304f'>
				{EXITS.map(([name, x, y]) => (
					<text key={name} x={x} y={y}>
						{name}
					</text>
				))}
			</g>
			<text x='85' y='405' fontSize='27' fill='#a77fc0' transform='rotate(62 85 405)'>
				SUK
			</text>
		</g>

		<g fill='none'>
			{STOPS.map(([x, y]) => (
				<path
					key={`${x}-${y}`}
					d={`M${START[0]} ${START[1]}L${x} ${y}`}
					stroke='#f59e0b'
					strokeOpacity='0.8'
					strokeWidth='6'
					strokeDasharray='21 18'
				/>
			))}
			<path d={`M${START.join(' ')}L${NEAREST.join(' ')}`} stroke='#16a34a' strokeOpacity='0.75' strokeWidth='12' />
			<path d='M563 795L3728 254' stroke='#f5a030' strokeWidth='5' strokeDasharray='21 18' />
			<path d='M563 795L3728 254' stroke='#dc2f2f' strokeOpacity='0.8' strokeWidth='11' strokeDasharray='31 12' />
		</g>
		{STOPS.map(([x, y]) => (
			<circle key={`${x}-${y}`} cx={x} cy={y} r='18' fill='#f59e0b' fillOpacity='0.85' stroke='#f59e0b' strokeWidth='6' />
		))}
		<circle cx={NEAREST[0]} cy={NEAREST[1]} r='23' fill='#16a34a' fillOpacity='0.85' stroke='#16a34a' strokeWidth='7' />
		<circle cx={START[0]} cy={START[1]} r='26' fill='#2563eb' fillOpacity='0.9' stroke='#1d4fd8' strokeWidth='7' />
	</svg>
);

const SummaryCard = ({ kind, order, address, distance }) => (
	<Card>
		<div className='kind'>{kind}</div>
		<h2>{order}</h2>
		<p>{address}</p>
		<p>Jarak: {distance}</p>
	</Card>
);

const App = () => {
	return (
		<Page>
			<GlobalStyle />
			<TopBar>
				<LogoLink href='#'>
					<Logo />
				</LogoLink>
				<SearchForm>
					<input type='text' placeholder='Search...' aria-label='Search' />
					<button type='button' aria-label='Search'>
						<Search size={14} />
					</button>
				</SearchForm>
				<Notices>
					<RoundButton aria-label='Messages'>
						<MailGlyph />
						<Badge>4</Badge>
					</RoundButton>
					<RoundButton aria-label='Notifications'>
						<Bell size={15} />
						<Badge>3</Badge>
					</RoundButton>
				</Notices>
				<Profile>
					<span className='avatar' />
					<span className='name'>
						John Doe Junior
						<span className='role'>Administrator</span>
					</span>
					<ChevronDown size={16} strokeWidth={3} />
				</Profile>
			</TopBar>

			<Body>
				<Sidebar>
					<SidebarHead>
						<span>Navigation</span>
						<button aria-label='Toggle menu'>
							<Menu size={16} />
						</button>
					</SidebarHead>
					<ul>
						{NAV.map((item) => (
							<li key={item.label}>
								<NavLink href='#' $muted={item.muted}>
									{item.icon}
									{item.label}
								</NavLink>
							</li>
						))}
					</ul>
				</Sidebar>

				<Main>
					<TitleBar>
						<h1>Driver</h1>
						<button aria-label='Back'>
							<ChevronLeft size={22} />
						</button>
					</TitleBar>
					<Progress />
					<Content>
						<Panel>
							<Legend>
								{LEGEND.map(([label, color]) => (
									<Chip key={label} $color={color}>
										{label}
									</Chip>
								))}
							</Legend>
							<MapBox>
								<RouteMap />
								<ZoomControl>
									<button aria-label='Zoom in'>
										<svg width='12' height='12' viewBox='0 0 12 12'>
											<path d='M6 0v12M0 6h12' stroke='#000' strokeWidth='2' />
										</svg>
									</button>
									<button aria-label='Zoom out'>
										<svg width='12' height='12' viewBox='0 0 12 12'>
											<path d='M0 6h12' stroke='#000' strokeWidth='2' />
										</svg>
									</button>
								</ZoomControl>
								<Attribution>
									<a href='#'>
										<svg width='12' height='8' viewBox='0 0 12 8'>
											<path fill='#4c7be1' d='M0 0h12v4H0z' />
											<path fill='#ffd500' d='M0 4h12v4H0z' />
										</svg>
										Leaflet
									</a>
									<span>| © OpenStreetMap contributors</span>
								</Attribution>
							</MapBox>
							<Cards>
								<SummaryCard
									kind='TERDEKAT'
									order='ORD-20260524224939-XP8'
									address='Yayasan Atmadipura Cisalak Tengah Rt.04 Rw.05, Cibeber, Cianjur, Jawa Barat'
									distance='2,75 km'
								/>
								<SummaryCard
									kind='TERJAUH'
									order='ORD-20250506084225-QUF'
									address='Pos Satpam Pilang Mas Garden, Jalan Setrayasa Barat Raya No.1, Kedungjaya, Kedawung (Rumah tingkat putih pagar hijau di pertigaan jalan), KAB. CIREBON, KEDAWUNG, JAWA BARAT, ID, 45153'
									distance='160,04 km'
								/>
							</Cards>
						</Panel>
					</Content>
				</Main>
			</Body>
		</Page>
	);
};

export default App;
